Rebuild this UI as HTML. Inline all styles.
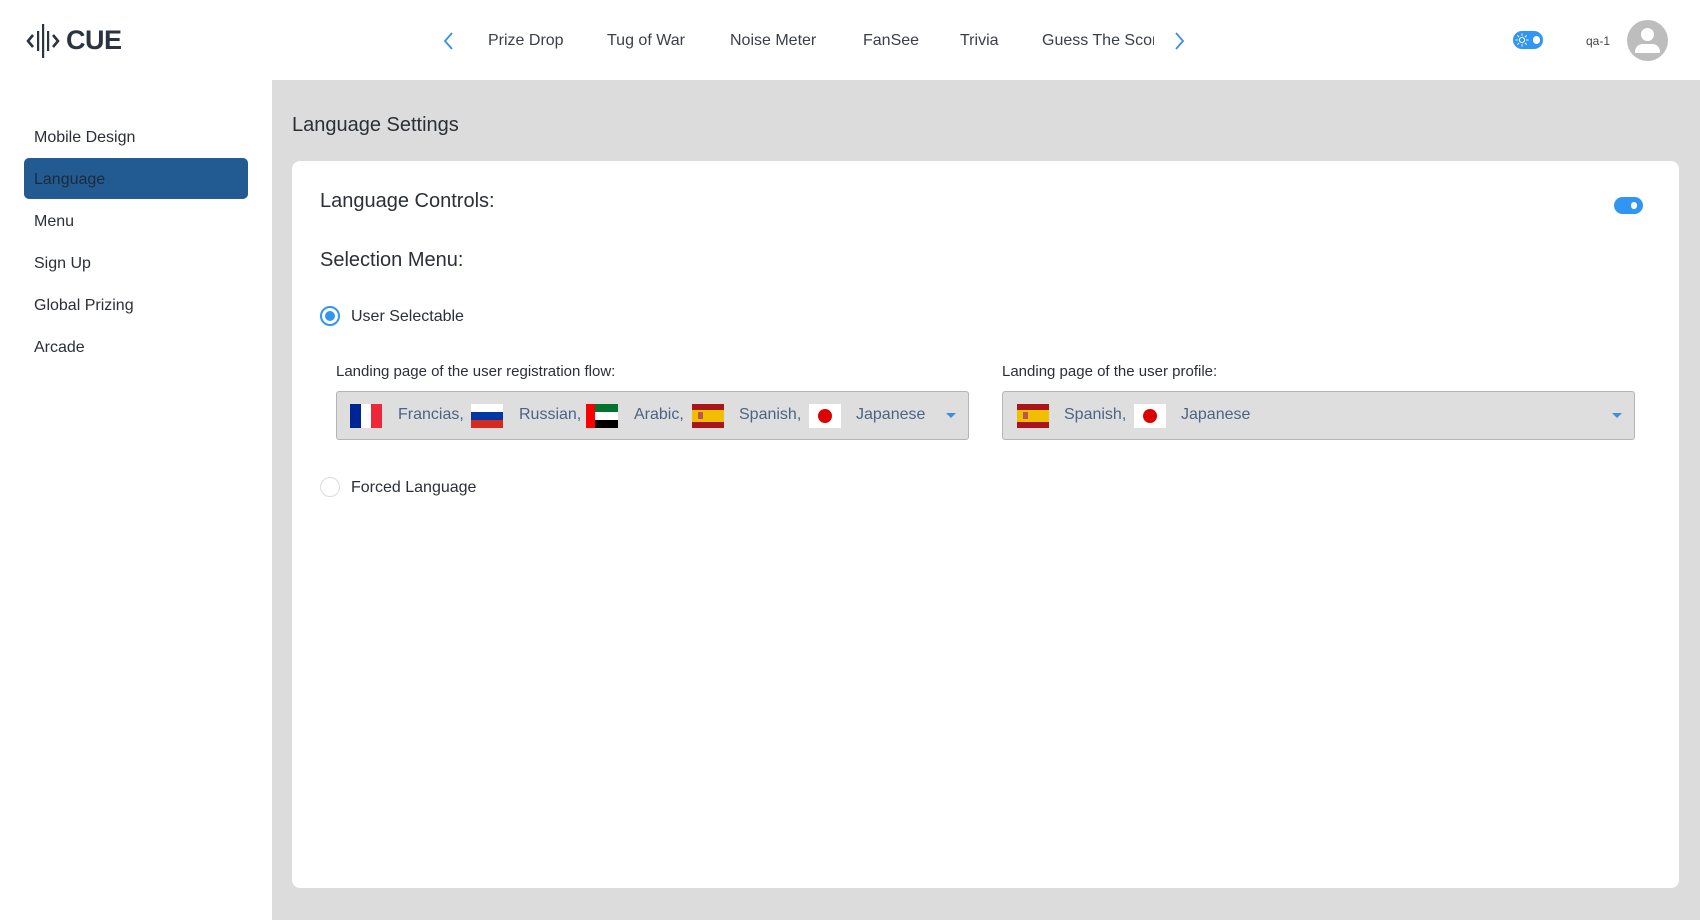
<!DOCTYPE html>
<html><head><meta charset="utf-8"><style>
*{margin:0;padding:0;box-sizing:border-box}
body{width:1700px;height:920px;overflow:hidden;background:#fff;font-family:"Liberation Sans",sans-serif;color:#2b2f36;position:relative}
.a{position:absolute;white-space:nowrap}
.nav{top:32px;font-size:16px;color:#3a3f47}
.side{left:34px;font-size:16px;color:#2b2f36}
.flag{position:absolute;top:12px;width:32px;height:24px;overflow:hidden}
.dd{position:absolute;top:391px;width:633px;height:49px;background:#dedede;border:1px solid #b5b5b5;border-radius:3px}
.dd span{position:absolute;top:14px;font-size:16px;color:#4c6484}
.arrow{position:absolute;top:21px;width:0;height:0;border-left:5px solid transparent;border-right:5px solid transparent;border-top:5px solid #3b8fe0}
</style></head><body>
<svg class="a" style="left:25px;top:23px" width="36" height="36" viewBox="0 0 36 36">
<path d="M8 12 L3 18 L8 24" fill="none" stroke="#2a3440" stroke-width="2.6"/>
<rect x="12" y="8" width="2.2" height="20" fill="#2a3440"/>
<rect x="17" y="1" width="2.2" height="34" fill="#2a3440"/>
<rect x="22" y="8" width="2.2" height="20" fill="#2a3440"/>
<path d="M28 12 L33 18 L28 24" fill="none" stroke="#2a3440" stroke-width="2.6"/>
</svg>
<div class="a" style="left:66px;top:25px;font-size:27px;font-weight:bold;color:#2a3440;letter-spacing:-0.5px">CUE</div>
<svg class="a" style="left:442px;top:31px" width="12" height="20"><path d="M10 2 L3 10 L10 18" fill="none" stroke="#3b8fe0" stroke-width="1.8"/></svg>
<div class="a nav" style="left:488px">Prize Drop</div>
<div class="a nav" style="left:607px">Tug of War</div>
<div class="a nav" style="left:730px">Noise Meter</div>
<div class="a nav" style="left:863px">FanSee</div>
<div class="a nav" style="left:960px">Trivia</div>
<div class="a nav" style="left:1042px;width:112px;overflow:hidden">Guess The Score</div>
<svg class="a" style="left:1174px;top:31px" width="12" height="20"><path d="M2 2 L9 10 L2 18" fill="none" stroke="#3b8fe0" stroke-width="1.8"/></svg>
<div class="a" style="left:1513px;top:31px;width:30px;height:18px;border-radius:9px;background:#3196f3"></div>
<svg class="a" style="left:1515px;top:33px" width="14" height="14" viewBox="0 0 14 14"><circle cx="7" cy="7" r="2.6" fill="none" stroke="#fff" stroke-width="1"/><g stroke="#fff" stroke-width="1"><line x1="7" y1="0.5" x2="7" y2="2.8"/><line x1="7" y1="11.2" x2="7" y2="13.5"/><line x1="0.5" y1="7" x2="2.8" y2="7"/><line x1="11.2" y1="7" x2="13.5" y2="7"/><line x1="2.4" y1="2.4" x2="4" y2="4"/><line x1="10" y1="10" x2="11.6" y2="11.6"/><line x1="2.4" y1="11.6" x2="4" y2="10"/><line x1="10" y1="4" x2="11.6" y2="2.4"/></g></svg>
<div class="a" style="left:1533px;top:36px;width:7px;height:8px;border-radius:4px;background:#fff"></div>
<div class="a" style="left:1586px;top:34px;font-size:12px;color:#444">qa-1</div>
<div class="a" style="left:1627px;top:20px;width:41px;height:41px;border-radius:50%;background:#bdbdbd;overflow:hidden">
<div style="position:absolute;left:14px;top:8px;width:13px;height:13px;border-radius:50%;background:#fff"></div>
<div style="position:absolute;left:8px;top:24px;width:25px;height:9px;border-radius:12px 12px 2px 2px;background:#fff"></div>
</div>
<div class="a side" style="top:129px">Mobile Design</div>
<div class="a" style="left:24px;top:158px;width:224px;height:41px;border-radius:5px;background:#215b91"></div>
<div class="a side" style="top:171px;color:#1c2a3a">Language</div>
<div class="a side" style="top:213px">Menu</div>
<div class="a side" style="top:255px">Sign Up</div>
<div class="a side" style="top:297px">Global Prizing</div>
<div class="a side" style="top:339px">Arcade</div>
<div class="a" style="left:272px;top:80px;width:1428px;height:840px;background:#dcdcdc"></div>
<div class="a" style="left:292px;top:114px;font-size:20px;color:#2b2f36">Language Settings</div>
<div class="a" style="left:292px;top:161px;width:1387px;height:727px;background:#fff;border-radius:8px"></div>
<div class="a" style="left:320px;top:190px;font-size:20px">Language Controls:</div>
<div class="a" style="left:1614px;top:197px;width:29px;height:17px;border-radius:9px;background:#3196f3"></div>
<div class="a" style="left:1631px;top:202px;width:6px;height:7px;border-radius:3px;background:#fff"></div>
<div class="a" style="left:320px;top:249px;font-size:20px">Selection Menu:</div>
<div class="a" style="left:320px;top:306px;width:20px;height:20px;border-radius:50%;border:2px solid #3196f3"></div>
<div class="a" style="left:325px;top:311px;width:10px;height:10px;border-radius:50%;background:#3196f3"></div>
<div class="a" style="left:351px;top:308px;font-size:16px">User Selectable</div>
<div class="a" style="left:336px;top:363px;font-size:15px">Landing page of the user registration flow:</div>
<div class="a" style="left:1002px;top:363px;font-size:15px">Landing page of the user profile:</div>
<div class="dd" style="left:336px">
 <div class="flag" style="left:13px;display:flex"><div style="flex:1;background:#002395"></div><div style="flex:1;background:#fff"></div><div style="flex:1;background:#ed2939"></div></div>
 <span style="left:61px">Francias,</span>
 <div class="flag" style="left:134px;display:flex;flex-direction:column"><div style="flex:1;background:#fff"></div><div style="flex:1;background:#0039a6"></div><div style="flex:1;background:#d52b1e"></div></div>
 <span style="left:182px">Russian,</span>
 <div class="flag" style="left:249px;display:flex;flex-direction:column;background:#fff"><div style="flex:1;background:#00732f"></div><div style="flex:1;background:#fff"></div><div style="flex:1;background:#000"></div><div style="position:absolute;left:0;top:0;width:9px;height:24px;background:#f00"></div></div>
 <span style="left:297px">Arabic,</span>
 <div class="flag" style="left:355px;display:flex;flex-direction:column"><div style="flex:1;background:#aa151b"></div><div style="flex:2;background:#f1bf00"></div><div style="flex:1;background:#aa151b"></div><div style="position:absolute;left:6px;top:8px;width:5px;height:7px;background:#b55"></div></div>
 <span style="left:402px">Spanish,</span>
 <div class="flag" style="left:472px;background:#fff"><div style="position:absolute;left:9px;top:5px;width:14px;height:14px;border-radius:50%;background:#d00"></div></div>
 <span style="left:519px">Japanese</span>
 <div class="arrow" style="left:609px"></div>
</div>
<div class="dd" style="left:1002px">
 <div class="flag" style="left:14px;display:flex;flex-direction:column"><div style="flex:1;background:#aa151b"></div><div style="flex:2;background:#f1bf00"></div><div style="flex:1;background:#aa151b"></div><div style="position:absolute;left:6px;top:8px;width:5px;height:7px;background:#b55"></div></div>
 <span style="left:61px">Spanish,</span>
 <div class="flag" style="left:131px;background:#fff"><div style="position:absolute;left:9px;top:5px;width:14px;height:14px;border-radius:50%;background:#d00"></div></div>
 <span style="left:178px">Japanese</span>
 <div class="arrow" style="left:609px"></div>
</div>
<div class="a" style="left:320px;top:477px;width:20px;height:20px;border-radius:50%;border:1.5px solid #ddd"></div>
<div class="a" style="left:351px;top:479px;font-size:16px">Forced Language</div>
</body></html>
